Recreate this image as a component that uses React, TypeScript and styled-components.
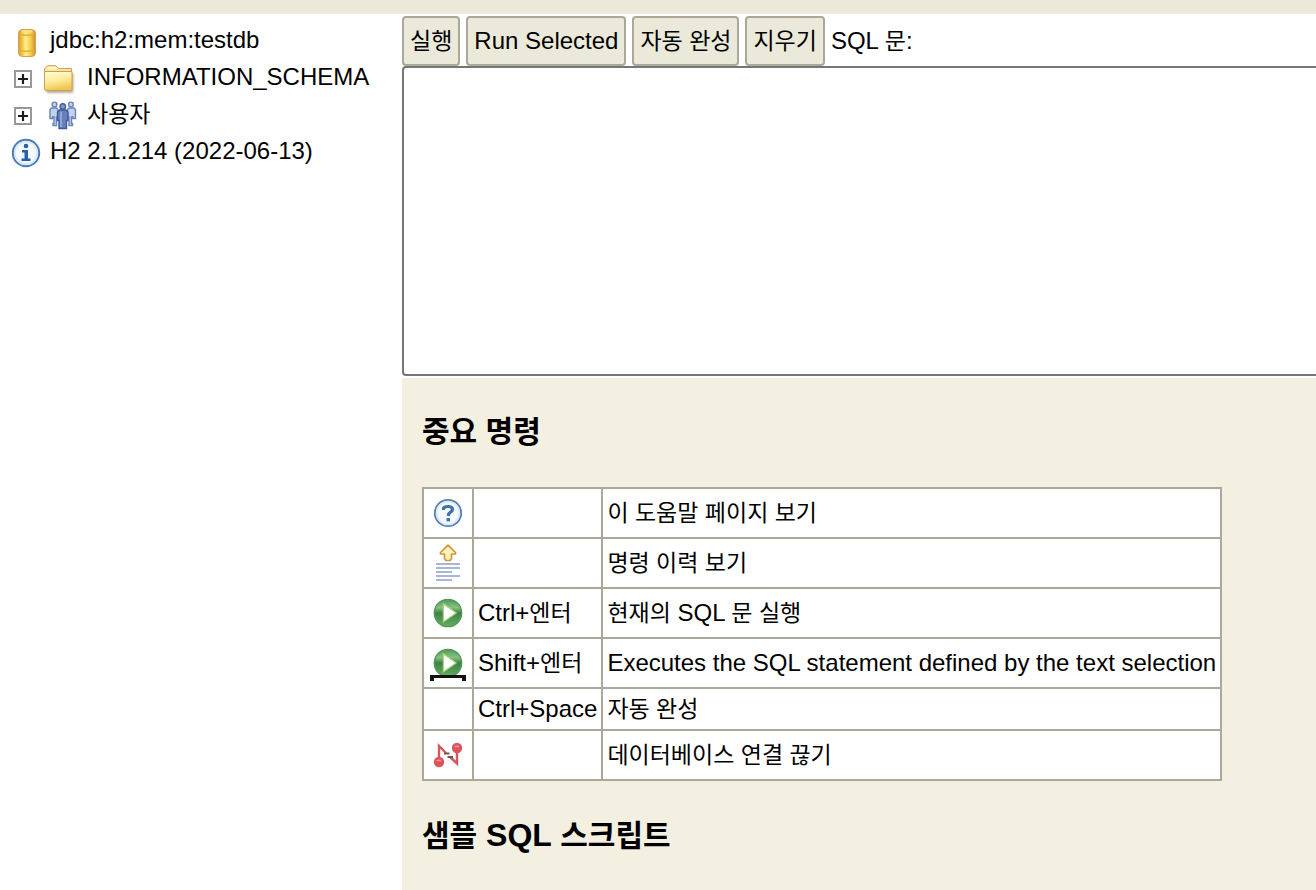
import React from 'react';
import styled, { createGlobalStyle } from 'styled-components';

const GlobalStyle = createGlobalStyle`
  *, *::before, *::after { box-sizing: border-box; }
  body {
    margin: 0;
    background: #fff;
    color: #000;
    font: 24px/32px "Liberation Sans", "Noto Sans CJK KR", sans-serif;
    overflow-x: hidden;
  }
`;

const Page = styled.div`
  display: flex;
  flex-direction: column;
  min-height: 100vh;
`;

const TopBar = styled.header`
  flex: none;
  height: 14px;
  background: #ebe9da;
`;

const Frames = styled.div`
  display: flex;
  flex: 1;
`;

const Tree = styled.nav`
  flex: none;
  width: 402px;
  padding-top: 9px;
`;

const TreeRow = styled.div`
  display: flex;
  align-items: center;
  height: 37px;
  white-space: nowrap;
`;

const TreeLink = styled.a`
  color: inherit;
  text-decoration: none;
  display: flex;
  align-items: center;
`;

const TreeLabel = styled.span`
  padding-bottom: 3px;
`;

const Toggle = styled.button`
  display: block;
  padding: 0;
  border: 0;
  background: none;
  width: 37px;
  height: 37px;
`;

const Svg = styled.svg`
  display: block;
  flex: none;
`;

const Ko = styled.span<{ $large?: boolean }>`
  font-size: ${(p) => (p.$large ? '30px' : '23px')};
`;

const Main = styled.main`
  flex: 1;
  min-width: 0;
  display: flex;
  flex-direction: column;
`;

const Toolbar = styled.div`
  display: flex;
  align-items: center;
  gap: 6px;
  padding-top: 2px;
`;

const ToolButton = styled.button`
  height: 50px;
  padding: 0 6px;
  border: 2px solid #aba89a;
  border-radius: 4px;
  background: #ebe9da;
  color: #000;
  font: inherit;
  white-space: nowrap;
`;

const SqlInput = styled.textarea`
  display: block;
  height: 310px;
  margin: 0 -4px 2px 0;
  padding: 4px;
  border: 2px solid #767676;
  border-radius: 4px;
  background: #fff;
  font: inherit;
  resize: none;
`;

const Help = styled.section`
  flex: 1;
  padding: 35px 20px 36px;
  background: #f3f0e2;
`;

const Heading = styled.h3`
  margin: 0;
  font-size: 32px;
  line-height: 36px;
  font-weight: bold;
`;

const Commands = styled.table`
  margin: 37px 0 36px;
  border-collapse: collapse;
  background: #fff;
`;

const Cell = styled.td`
  padding: 4px;
  border: 2px solid #aba89a;
  line-height: 32px;
  white-space: nowrap;
`;

const DatabaseIcon = () => (
  <Svg width="50" height="37" viewBox="0 0 50 37" aria-hidden="true">
    <defs>
      <linearGradient id="db">
        <stop offset="0" stopColor="#dd9a35" />
        <stop offset=".2" stopColor="#f2c23f" />
        <stop offset=".42" stopColor="#fff08c" />
        <stop offset=".7" stopColor="#f6d04c" />
        <stop offset="1" stopColor="#d18c34" />
      </linearGradient>
    </defs>
    <rect x="18.500" y="6.500" width="17" height="27" rx="4" fill="url(#db)" stroke="#d5a053" />
    <path d="M20 11.500Q27 13 34 11.500M20 27.500Q27 29 34 27.500" fill="none" stroke="#e3b03c" strokeWidth="1.300" />
    <path d="M21.500 8.500H32.500" fill="none" stroke="#fbe08a" strokeWidth="1.800" />
  </Svg>
);

const FolderIcon = () => (
  <Svg width="50" height="37" viewBox="0 0 50 37" aria-hidden="true">
    <defs>
      <linearGradient id="folder" x2=".3" y2="1">
        <stop offset="0" stopColor="#fffcc8" />
        <stop offset=".55" stopColor="#fdec9c" />
        <stop offset="1" stopColor="#efc656" />
      </linearGradient>
      <filter id="folderShadow" x="-20%" y="-20%" width="140%" height="150%">
        <feGaussianBlur stdDeviation="1" />
      </filter>
    </defs>
    <rect x="9" y="13" width="27.500" height="20" rx="2" fill="#857b60" opacity=".6" filter="url(#folderShadow)" />
    <path d="M7.500 28V8.500L11 5.500H18.500L21.500 8.500H34.500V28Z" fill="#f8e2a4" stroke="#d2a658" />
    <path d="M11.500 7H18L20.500 9.500H9.500Z" fill="#fff5c9" />
    <path d="M7.500 11.500H35V28.500Q35 30.500 33 30.500H9.500Q7.500 30.500 7.500 28.500Z" fill="url(#folder)" stroke="#cda04c" />
    <path d="M9 13H33.500" stroke="#fffde0" />
  </Svg>
);

const UsersIcon = () => (
  <Svg width="50" height="37" viewBox="0 0 50 37" aria-hidden="true">
    <g fill="#c3d2ec" stroke="#6a84ba" strokeWidth="1.400">
      <path d="M14.500 11H19.500L21 12.500V20H19.500V28.500H16V26.500H17V20H15.500V21.500H13V12.500Z" />
      <path d="M37 11H32L30.500 12.500V20H32V28.500H35.500V26.500H34.500V20H36V21.500H38.500V12.500Z" />
      <circle cx="17.500" cy="7.500" r="2.400" />
      <circle cx="34" cy="7.500" r="2.400" />
    </g>
    <path d="M22.500 13H29L31 15V23.500H29.500V31.500H22V23.500H20.500V15Z" fill="#6680bd" stroke="#405a9a" strokeWidth="1.400" />
    <path d="M24 14.500V30" stroke="#93abd9" strokeWidth="1.800" />
    <circle cx="25.800" cy="9.500" r="2.800" fill="#7f99cf" stroke="#445e9e" strokeWidth="1.400" />
  </Svg>
);

const InfoIcon = () => (
  <Svg width="50" height="37" viewBox="0 0 50 37" aria-hidden="true">
    <circle cx="26" cy="19" r="13.200" fill="#f4f9ff" stroke="#4a7cb8" strokeWidth="2" />
    <circle cx="26" cy="19" r="11.200" fill="none" stroke="#d8e7f6" strokeWidth="1.500" />
    <circle cx="26" cy="12" r="2.300" fill="#2461a9" />
    <path d="M22 16H28V24.500H30.500V27H21.500V24.500H24.500V18.500H22Z" fill="#2461a9" />
  </Svg>
);

const PlusIcon = () => (
  <Svg width="37" height="37" viewBox="0 0 37 37" aria-hidden="true">
    <rect x="15" y="11" width="16" height="16" fill="#fff" stroke="#989898" strokeWidth="2" />
    <path d="M18 19H28M23 14V24" stroke="#1c1c1c" strokeWidth="2.200" />
  </Svg>
);

const HelpIcon = () => (
  <Svg width="40" height="40" viewBox="0 0 40 40" aria-hidden="true">
    <circle cx="20" cy="20" r="13.200" fill="#f6faff" stroke="#5580b5" strokeWidth="1.800" />
    <circle cx="20" cy="20" r="11.300" fill="none" stroke="#dce8f5" strokeWidth="1.500" />
    <path d="M15.500 17V15.500Q16 13.500 20 13.500T24.500 16.200Q24.500 18 22.500 19.200T20.200 23" fill="none" stroke="#416fa8" strokeWidth="3.200" />
    <rect x="18.500" y="25" width="3.500" height="3.500" rx="1" fill="#416fa8" />
  </Svg>
);

const HistoryIcon = () => (
  <Svg width="40" height="40" viewBox="0 0 40 40" aria-hidden="true">
    <path d="M20 2.200L27.500 9.500V11H23.500V15.500L22 17.500H18L16.500 15.500V11H12.500V9.500Z" fill="#fff0b8" stroke="#c99b3e" strokeWidth="1.700" strokeLinejoin="round" />
    <path d="M8 21H32M8 25H32M8 29H24M8 33H32M8 37H24" stroke="#aab6d8" strokeWidth="2" />
  </Svg>
);

const RunIcon = ({ selected = false }: { selected?: boolean }) => {
  const id = selected ? 'runSelected' : 'run';
  return (
    <Svg width="40" height="40" viewBox="0 0 40 40" aria-hidden="true">
      <defs>
        <linearGradient id={id} x1="0" y1="0" x2="0" y2="1">
          <stop offset="0" stopColor="#4f9a55" />
          <stop offset=".3" stopColor="#8abf84" />
          <stop offset=".5" stopColor="#3d8244" />
          <stop offset="1" stopColor="#69ae61" />
        </linearGradient>
      </defs>
      <circle cx="20" cy="20" r="13.700" fill={`url(#${id})`} stroke="#4f9958" strokeWidth="1.300" />
      <path d="M15.500 11L28 20L15.500 28.500Z" fill="#fff" stroke="#a4db7c" strokeWidth="1.500" />
      <path d="M16 12.500L27 20L16 27.500Z" fill="#fff" />
      {selected && <path d="M2 32H38V38H34V35H6V38H2Z" fill="#111" />}
    </Svg>
  );
};

const DisconnectIcon = () => (
  <Svg width="40" height="40" viewBox="0 0 40 40" aria-hidden="true">
    <path d="M11 27V11L18 18M29 13V28.500L22.500 22.500" fill="none" stroke="#d3575c" strokeWidth="2.400" />
    <path d="M16 18.500H21.500M19.500 22H25" stroke="#765052" strokeWidth="2" />
    <circle cx="11" cy="27" r="5.200" fill="#dc545b" />
    <circle cx="29" cy="13" r="5.200" fill="#dc545b" />
    <path d="M8.500 25.500H13M26.500 11.500H31" stroke="#f09a9b" strokeWidth="1.500" />
  </Svg>
);

const commands: { icon: React.ReactNode; keys: React.ReactNode; text: React.ReactNode }[] = [
  { icon: <HelpIcon />, keys: '', text: <Ko>이 도움말 페이지 보기</Ko> },
  { icon: <HistoryIcon />, keys: '', text: <Ko>명령 이력 보기</Ko> },
  { icon: <RunIcon />, keys: <>Ctrl+<Ko>엔터</Ko></>, text: <><Ko>현재의</Ko> SQL <Ko>문 실행</Ko></> },
  {
    icon: <RunIcon selected />,
    keys: <>Shift+<Ko>엔터</Ko></>,
    text: 'Executes the SQL statement defined by the text selection',
  },
  { icon: null, keys: 'Ctrl+Space', text: <Ko>자동 완성</Ko> },
  { icon: <DisconnectIcon />, keys: '', text: <Ko>데이터베이스 연결 끊기</Ko> },
];

export default function App() {
  return (
    <Page lang="ko">
      <GlobalStyle />
      <TopBar />
      <Frames>
        <Tree>
          <TreeRow>
            <TreeLink href="#database"><DatabaseIcon /><TreeLabel>jdbc:h2:mem:testdb</TreeLabel></TreeLink>
          </TreeRow>
          <TreeRow>
            <Toggle type="button" aria-label="INFORMATION_SCHEMA" aria-expanded={false}><PlusIcon /></Toggle>
            <TreeLink href="#schema"><FolderIcon /><TreeLabel>INFORMATION_SCHEMA</TreeLabel></TreeLink>
          </TreeRow>
          <TreeRow>
            <Toggle type="button" aria-label="사용자" aria-expanded={false}><PlusIcon /></Toggle>
            <TreeLink href="#users"><UsersIcon /><TreeLabel><Ko>사용자</Ko></TreeLabel></TreeLink>
          </TreeRow>
          <TreeRow><InfoIcon /><TreeLabel>H2 2.1.214 (2022-06-13)</TreeLabel></TreeRow>
        </Tree>
        <Main>
          <Toolbar>
            <ToolButton type="button"><Ko>실행</Ko></ToolButton>
            <ToolButton type="button">Run Selected</ToolButton>
            <ToolButton type="button"><Ko>자동 완성</Ko></ToolButton>
            <ToolButton type="button"><Ko>지우기</Ko></ToolButton>
            <label htmlFor="sql">SQL <Ko>문</Ko>:</label>
          </Toolbar>
          <SqlInput id="sql" />
          <Help>
            <Heading><Ko $large>중요 명령</Ko></Heading>
            <Commands>
              <tbody>
                {commands.map((c, i) => (
                  <tr key={i}>
                    <Cell>{c.icon}</Cell>
                    <Cell>{c.keys}</Cell>
                    <Cell>{c.text}</Cell>
                  </tr>
                ))}
              </tbody>
            </Commands>
            <Heading><Ko $large>샘플</Ko> SQL <Ko $large>스크립트</Ko></Heading>
          </Help>
        </Main>
      </Frames>
    </Page>
  );
}
